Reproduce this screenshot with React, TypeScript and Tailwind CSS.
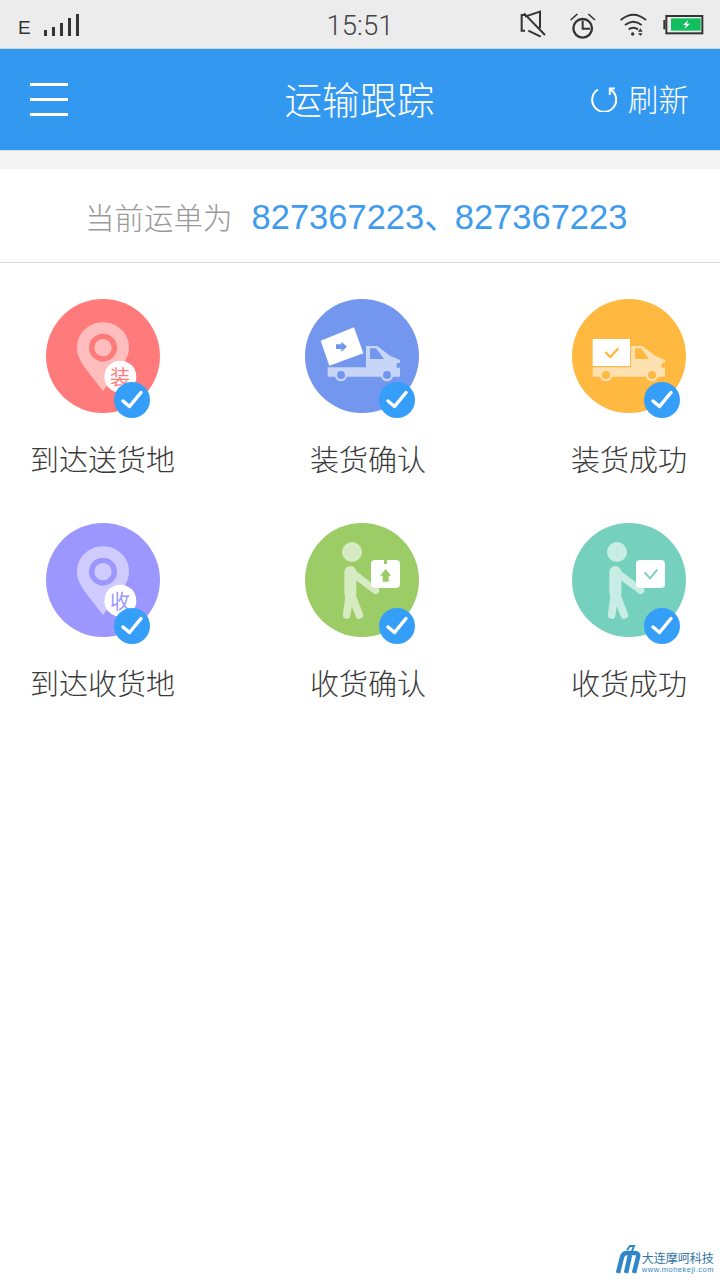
import React from 'react';

const CJK = "font-['Noto_Sans_CJK_SC',sans-serif]";

const Check = ({ className }: { className: string }) => (
  <div className={`absolute w-9 h-9 rounded-full bg-[#349ef8] flex items-center justify-center ${className}`}>
    <svg width="36" height="36" viewBox="0 0 36 36" fill="none">
      <path d="M9 19l6.500 5.500L27 10.500" stroke="#fff" strokeWidth="3.500" strokeLinecap="round" strokeLinejoin="round" />
    </svg>
  </div>
);

const Pin = ({ bg, light, word, wordColor }: { bg: string; light: string; word: string; wordColor: string }) => (
  <>
    <svg className="absolute inset-0" width="114" height="114" viewBox="48 42 342 342">
      <path d="M219 112c43 0 78 33 78 76 0 22-12 42-26 62l-52 68-53-68c-14-20-25-40-25-62 0-43 35-76 78-76z" fill={light} />
      <circle cx="219" cy="188" r="42" fill={bg} />
      <circle cx="219" cy="188" r="26" fill={light} />
      <circle cx="271" cy="275" r="48" fill="#fff" />
    </svg>
    <span
      className={`absolute left-[64px] top-[66px] w-5 h-6 flex items-center justify-center text-[20px] leading-6 ${CJK} ${wordColor}`}
    >
      {word}
    </span>
  </>
);

const Truck = ({ bg, light }: { bg: string; light: string }) => (
  <>
    <path
      d="M113 247h115v-64h34l38 29 30 13v8l-10 2v13h10v27H113z"
      fill={light}
    />
    <path d="M240 190h18l24 32h-42z" fill={bg} />
    <circle cx="153" cy="270" r="19" fill={light} />
    <circle cx="153" cy="270" r="12" fill={bg} />
    <circle cx="291" cy="270" r="19" fill={light} />
    <circle cx="291" cy="270" r="12" fill={bg} />
  </>
);

const TruckLoad = ({ bg, light }: { bg: string; light: string }) => (
  <svg className="absolute inset-0" width="114" height="114" viewBox="45 42 342 342">
    <Truck bg={bg} light={light} />
    <path d="M92 167l100-40 28 78-102 37z" fill="#fff" />
    <path d="M138 178h16v-8l17 15-17 15v-8h-16z" fill={bg} />
  </svg>
);

const TruckDone = ({ bg, light }: { bg: string; light: string }) => (
  <svg className="absolute inset-0" width="114" height="114" viewBox="51 42 342 342">
    <Truck bg={bg} light={light} />
    <rect x="113" y="162" width="112" height="81" fill="#fff" />
    <path d="M151 201l15 15 24-26" fill="none" stroke={bg} strokeWidth="7" />
  </svg>
);

const Person = ({ light, viewBox, children }: { light: string; viewBox: string; children: React.ReactNode }) => (
  <svg className="absolute inset-0" width="114" height="114" viewBox={viewBox}>
    <circle cx="186" cy="126" r="30" fill={light} />
    <g fill="none" stroke={light} strokeLinecap="round" strokeLinejoin="round">
      <path d="M181 186v64" strokeWidth="36" />
      <path d="M195 195l62 46" strokeWidth="22" />
      <path d="M179 250l-9 65M183 250l25 65" strokeWidth="23" />
    </g>
    <rect x="243" y="150" width="87" height="84" rx="12" fill="#fff" />
    {children}
  </svg>
);

const steps = [
  {
    label: '到达送货地',
    bg: 'bg-[#ff7b7b]',
    wrap: 'ml-[16px]',
    labelCls: 'ml-0',
    check: 'left-[68px] top-[83px]',
    icon: <Pin bg="#ff7b7b" light="#ffbdbd" word="装" wordColor="text-[#ff7b7b]" />,
  },
  {
    label: '装货确认',
    bg: 'bg-[#7396ee]',
    wrap: 'ml-0',
    labelCls: 'ml-[5px]',
    check: 'left-[74px] top-[83px]',
    icon: <TruckLoad bg="#7396ee" light="#c7d5f8" />,
  },
  {
    label: '装货成功',
    bg: 'bg-[#ffb840]',
    wrap: 'ml-[1px]',
    labelCls: 'ml-0',
    check: 'left-[72px] top-[83px]',
    icon: <TruckDone bg="#ffb840" light="#ffe0b0" />,
  },
  {
    label: '到达收货地',
    bg: 'bg-[#9c97ff]',
    wrap: 'ml-[16px]',
    labelCls: 'ml-0',
    check: 'left-[68px] top-[85px]',
    icon: <Pin bg="#9c97ff" light="#cfcbff" word="收" wordColor="text-[#9c97ff]" />,
  },
  {
    label: '收货确认',
    bg: 'bg-[#9ccc65]',
    wrap: 'ml-0',
    labelCls: 'ml-[5px]',
    check: 'left-[74px] top-[85px]',
    icon: (
      <Person light="#d7ebc2" viewBox="45 39 342 342">
        <path d="M282 150h9v12h-9z" fill="#9ccc65" />
        <path d="M287 177l17 20h-8v18h-18v-18h-8z" fill="#9ccc65" />
      </Person>
    ),
  },
  {
    label: '收货成功',
    bg: 'bg-[#75d1bd]',
    wrap: 'ml-[1px]',
    labelCls: 'ml-0',
    check: 'left-[72px] top-[85px]',
    icon: (
      <Person light="#c8ede5" viewBox="51 39 342 342">
        <path d="M269 187l16 18 22-26" fill="none" stroke="#75d1bd" strokeWidth="6" />
      </Person>
    ),
  },
];

const StatusBar = () => (
  <div className="h-[49px] bg-[#ececec] border-b border-[#cfd4d8] grid grid-cols-[1fr_auto_1fr] items-start">
    <div className="flex items-end pl-[18px] pt-[14px]">
      <span className="text-[19px] leading-[16px] h-[16px] font-['Liberation_Sans',sans-serif] text-[#333]">E</span>
      <div className="flex items-end gap-[5px] ml-[13px] h-[22px]">
        <div className="w-[3px] h-[6px] bg-[#333]" />
        <div className="w-[3px] h-[9px] bg-[#333]" />
        <div className="w-[3px] h-[13px] bg-[#333]" />
        <div className="w-[3px] h-[18px] bg-[#333]" />
        <div className="w-[3px] h-[22px] bg-[#333]" />
      </div>
    </div>
    <span className="text-[27.500px] leading-[30px] pt-[11px] font-light font-['Roboto',sans-serif] text-[#444]">15:51</span>
    <div className="flex justify-end pr-[12px] pt-[10px]">
      <svg width="188" height="30" viewBox="0 0 564 90" fill="none" stroke="#333" strokeWidth="6">
        <path d="M15 15H5v47h10M15 20L60 5v50M25 62l37 18M12 10l63 65" />
        <circle cx="188" cy="55" r="28" strokeWidth="7" />
        <path d="M188 32v24h22" strokeWidth="6" />
        <path d="M152 30l20-18M205 12l20 18" strokeWidth="5" />
        <path d="M302 30q38-32 76 0M315 45q25-20 50 0M326 58q14-10 28 0" strokeWidth="6" />
        <circle cx="338" cy="72" r="5" fill="#333" stroke="none" />
        <path d="M361 55l-7 10h14zM354 70h14l-7 8z" fill="#333" stroke="none" />
        <path d="M430 30h6v28h-6z" fill="#333" stroke="none" />
        <rect x="439" y="18" width="108" height="52" strokeWidth="6" />
        <rect x="453" y="25" width="89" height="37" fill="#12bf5f" stroke="none" />
        <path d="M505 30l-16 15h9l-5 12 17-16h-10z" fill="#fff" stroke="none" />
      </svg>
    </div>
  </div>
);

const Header = () => (
  <div className={`h-[102px] bg-[#3398f0] border-b border-[#d9dde0] grid grid-cols-[1fr_auto_1fr] items-center pl-[30px] pr-[31px] text-white ${CJK}`}>
    <div className="flex flex-col gap-[12px] w-[38px]">
      <div className="h-[3px] bg-white" />
      <div className="h-[3px] bg-white" />
      <div className="h-[3px] bg-white" />
    </div>
    <h1 className="text-[37.500px] leading-none font-light mb-[3px]">运输跟踪</h1>
    <div className="flex items-center justify-end gap-[11px] mb-[3px]">
      <svg width="26" height="28" viewBox="0 0 26 28" fill="none" stroke="#fff" strokeWidth="2">
        <path d="M7 5.500a12 12 0 1 0 11.500-.500" />
        <path d="M18.800 11V4.500h5" />
      </svg>
      <span className="text-[30.500px] leading-none font-light">刷新</span>
    </div>
  </div>
);

const Logo = () => (
  <div className="flex items-end justify-end pr-[6px] pb-[6px] mt-auto">
    <svg width="26" height="30" viewBox="0 0 26 30" fill="none" stroke="#2f86c8" strokeWidth="4.500">
      <path d="M3 29L7 13Q8 9 12 9H20Q24 9 23 13L19 29" />
      <path d="M11 29L15 11" />
      <path d="M12 6l3-4h4l-2 5" strokeWidth="2" />
    </svg>
    <div className="flex flex-col ml-[1px]">
      <span className={`text-[12px] leading-[14px] text-[#2f74a8] ${CJK}`}>大连摩呵科技</span>
      <span className="text-[7.500px] leading-[9px] tracking-[0.5px] text-[#2f86c8] font-['Liberation_Sans',sans-serif]">www.mohekeji.com</span>
    </div>
  </div>
);

const App: React.FC = () => {
  return (
    <div className="w-[720px] h-[1280px] bg-white overflow-hidden flex flex-col">
      <StatusBar />
      <Header />
      <div className="h-[18px] bg-[#f4f4f4]" />
      <div className="h-[94px] border-b border-[#d9d9d9] flex items-center pl-[85px] pt-[3px] gap-[19px]">
        <span className={`text-[29.500px] leading-none font-light text-[#999] ${CJK}`}>当前运单为</span>
        <span className={`text-[34.500px] leading-none text-[#3f9bee] font-['Liberation_Sans','Noto_Sans_CJK_SC',sans-serif]`}>
          827367223<span className="tracking-[-4px]">、</span>827367223
        </span>
      </div>
      <div className="grid grid-cols-[275px_266px_150px] auto-rows-[224px] pl-[30px] pt-[36px]">
        {steps.map((s) => (
          <div key={s.label} className="flex flex-col">
            <div className={`relative w-[114px] h-[114px] rounded-full ${s.bg} ${s.wrap}`}>
              {s.icon}
              <Check className={s.check} />
            </div>
            <span className={`mt-[24px] text-[29px] leading-[42px] font-light whitespace-nowrap text-[#3a3a3a] ${CJK} ${s.labelCls}`}>
              {s.label}
            </span>
          </div>
        ))}
      </div>
      <Logo />
    </div>
  );
};

export default App;
